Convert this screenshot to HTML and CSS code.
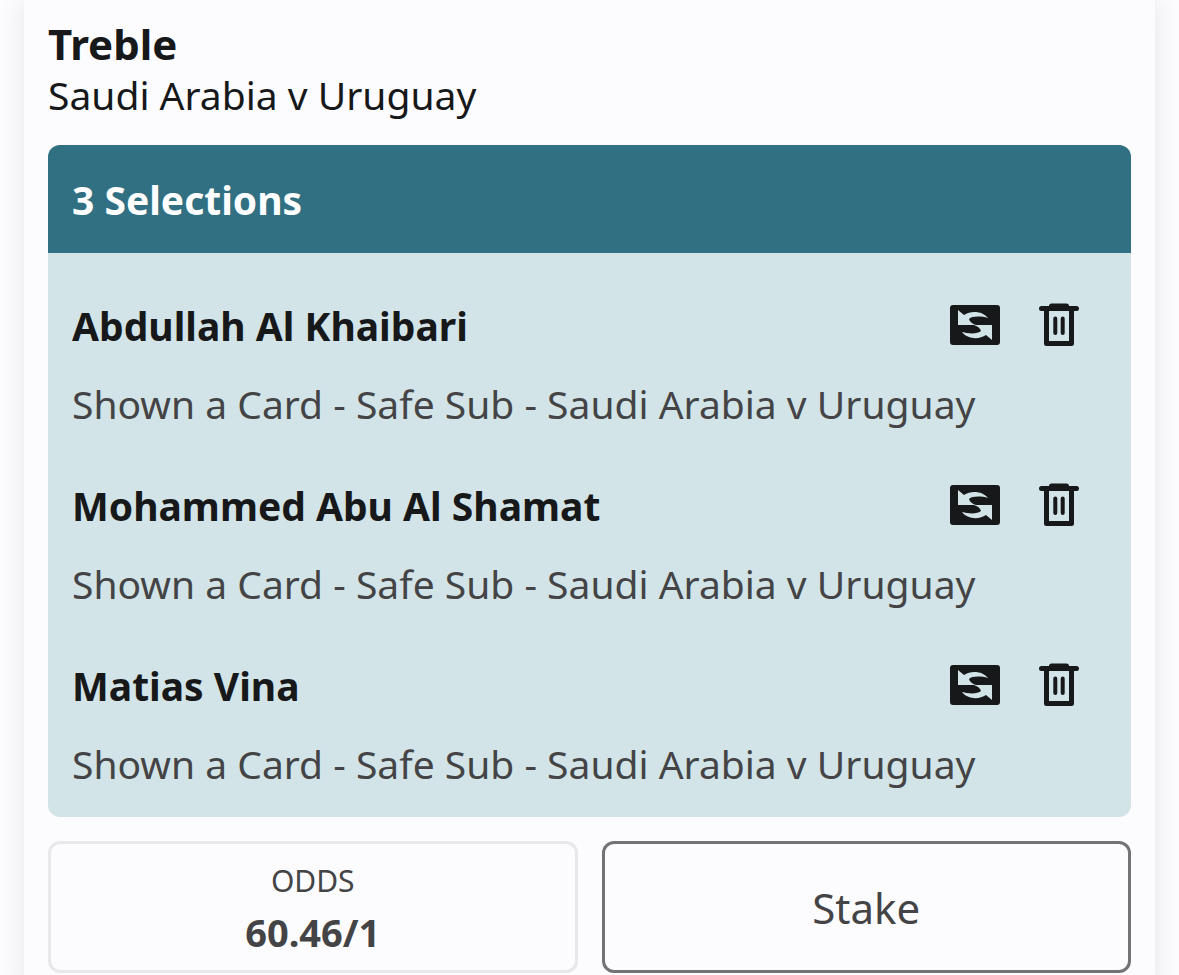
FILE: index.html
```html
<!DOCTYPE html>
<html lang="en">
<head>
<meta charset="utf-8">
<title>Bet slip</title>
<link rel="stylesheet" href="styles.css">
</head>
<body>
<svg class="defs" aria-hidden="true">
  <symbol id="swap" viewBox="0 0 50 40">
    <rect width="50" height="40" rx="3" fill="#17181a"/>
    <path fill="#d2e4e7" d="M8 5L14 10C21 5 33 6 38 13C31 11 22 11 19 14Q20 18 26 20H8Z"/>
    <path fill="#d2e4e7" d="M42 35L36 30C29 35 17 34 12 27C19 29 28 29 31 26Q30 22 24 20H42Z"/>
  </symbol>
  <symbol id="bin" viewBox="0 0 40 44">
    <path fill="none" stroke="#17181a" stroke-width="5" stroke-linecap="round" stroke-linejoin="round" d="M2.500 5.500h35M12.500 3h15M7.500 6v34.500h25V6"/>
    <path fill="none" stroke="#17181a" stroke-width="4" stroke-linecap="round" d="M16.300 15.500v14.500M23.700 15.500v14.500"/>
  </symbol>
</svg>
<main class="slip">
  <header class="heading">
    <h1 class="title">Treble</h1>
    <p class="event">Saudi Arabia v Uruguay</p>
  </header>
  <section class="card">
    <h2 class="card-head">3 Selections</h2>
    <ul class="list">
      <li class="item">
        <div class="row"><h3 class="name">Abdullah Al Khaibari</h3>
          <button class="icon" aria-label="Swap"><svg class="swap"><use href="#swap"/></svg></button>
          <button class="icon" aria-label="Remove"><svg class="bin"><use href="#bin"/></svg></button></div>
        <p class="market">Shown a Card - Safe Sub - Saudi Arabia v Uruguay</p>
      </li>
      <li class="item">
        <div class="row"><h3 class="name">Mohammed Abu Al Shamat</h3>
          <button class="icon" aria-label="Swap"><svg class="swap"><use href="#swap"/></svg></button>
          <button class="icon" aria-label="Remove"><svg class="bin"><use href="#bin"/></svg></button></div>
        <p class="market">Shown a Card - Safe Sub - Saudi Arabia v Uruguay</p>
      </li>
      <li class="item">
        <div class="row"><h3 class="name">Matias Vina</h3>
          <button class="icon" aria-label="Swap"><svg class="swap"><use href="#swap"/></svg></button>
          <button class="icon" aria-label="Remove"><svg class="bin"><use href="#bin"/></svg></button></div>
        <p class="market">Shown a Card - Safe Sub - Saudi Arabia v Uruguay</p>
      </li>
    </ul>
  </section>
  <div class="bet">
    <div class="odds"><span class="odds-label">ODDS</span><strong class="odds-value">60.46/1</strong></div>
    <input class="stake" type="text" placeholder="Stake" aria-label="Stake">
  </div>
</main>
</body>
</html>
```
FILE: styles.css
```css
* { box-sizing: border-box; margin: 0; padding: 0; }
body { background: #fcfcfe; color: #17181a; font-family: "Noto Sans", sans-serif; font-size: 39px; padding: 0 24px; }
.defs { display: none; }
.slip { background: #fcfcfe; padding: 16px 24px 24px; box-shadow: 0 0 24px #e6e6e9; }
.heading { margin-bottom: 27px; }
.title { font-size: 42px; line-height: 56px; font-weight: 700; }
.event { line-height: 46px; }
.card { background: #d2e4e7; border-radius: 12px; overflow: hidden; }
.card-head { background: #317082; color: #fff; font-size: 39px; line-height: 60px; padding: 25px 24px 23px; }
.list { list-style: none; padding: 24px 24px 0; }
.item { height: 180px; }
.row { display: flex; align-items: center; gap: 39px; height: 96px; padding-right: 28px; }
.name { flex: 1; font-size: 39px; line-height: 60px; font-weight: 700; padding-top: 2px; }
.icon { display: flex; border: 0; background: none; }
.swap { width: 50px; height: 40px; }
.bin { width: 40px; height: 44px; }
.market { color: #444446; line-height: 62px; }
.bet { display: grid; grid-template-columns: 1fr 1fr; gap: 24px; margin-top: 24px; }
.odds, .stake { height: 132px; border-radius: 12px; text-align: center; color: #444446; background: #fcfcfe; }
.odds { display: flex; flex-direction: column; justify-content: center; border: 3px solid #e8e8ea; }
.odds-label { font-size: 30px; line-height: 50px; }
.odds-value { font-size: 38px; line-height: 52px; }
.stake { width: 100%; border: 3px solid #737376; font: 42px "Noto Sans", sans-serif; }
.stake::placeholder { color: #444446; opacity: 1; }
```
